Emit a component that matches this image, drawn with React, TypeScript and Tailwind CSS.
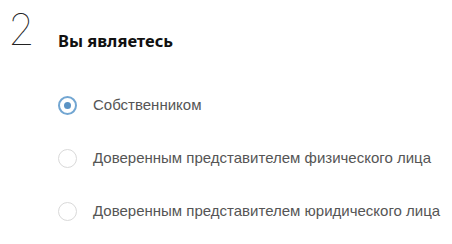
import React from "react";

const options = [
  { label: "Собственником", checked: true },
  { label: "Доверенным представителем физического лица", checked: false },
  { label: "Доверенным представителем юридического лица", checked: false },
];

export default function App() {
  return (
    <div className="w-[452px] h-[244px] bg-white overflow-hidden">
      <div className="flex items-start">
        <div className="w-[58px] pl-[8px] pt-[4px] text-[43px] leading-[50px] font-thin text-[#222] font-['Inter',sans-serif]">
          2
        </div>
        <div className="flex flex-col pt-[30px]">
          <div className="text-[16.5px] leading-[22px] font-bold text-[#111] font-['Noto_Sans',sans-serif]">
            Вы являетесь
          </div>
        </div>
      </div>
      <div className="flex flex-col pl-[58px] pt-[41px] gap-[33px]">
        {options.map((o) => (
          <label key={o.label} className="flex items-center h-[20px] gap-[16px]">
            {o.checked ? (
              <span className="w-[19px] h-[19px] rounded-full border-[2.5px] border-[#72a6d2] flex items-center justify-center">
                <span className="w-[7px] h-[7px] rounded-full bg-[#5b93c4]" />
              </span>
            ) : (
              <span className="w-[19px] h-[19px] rounded-full border border-[#d9d9d9]" />
            )}
            <span className="text-[15px] leading-[20px] text-[#555] font-['Liberation_Sans',Arial,sans-serif]">
              {o.label}
            </span>
          </label>
        ))}
      </div>
    </div>
  );
}
